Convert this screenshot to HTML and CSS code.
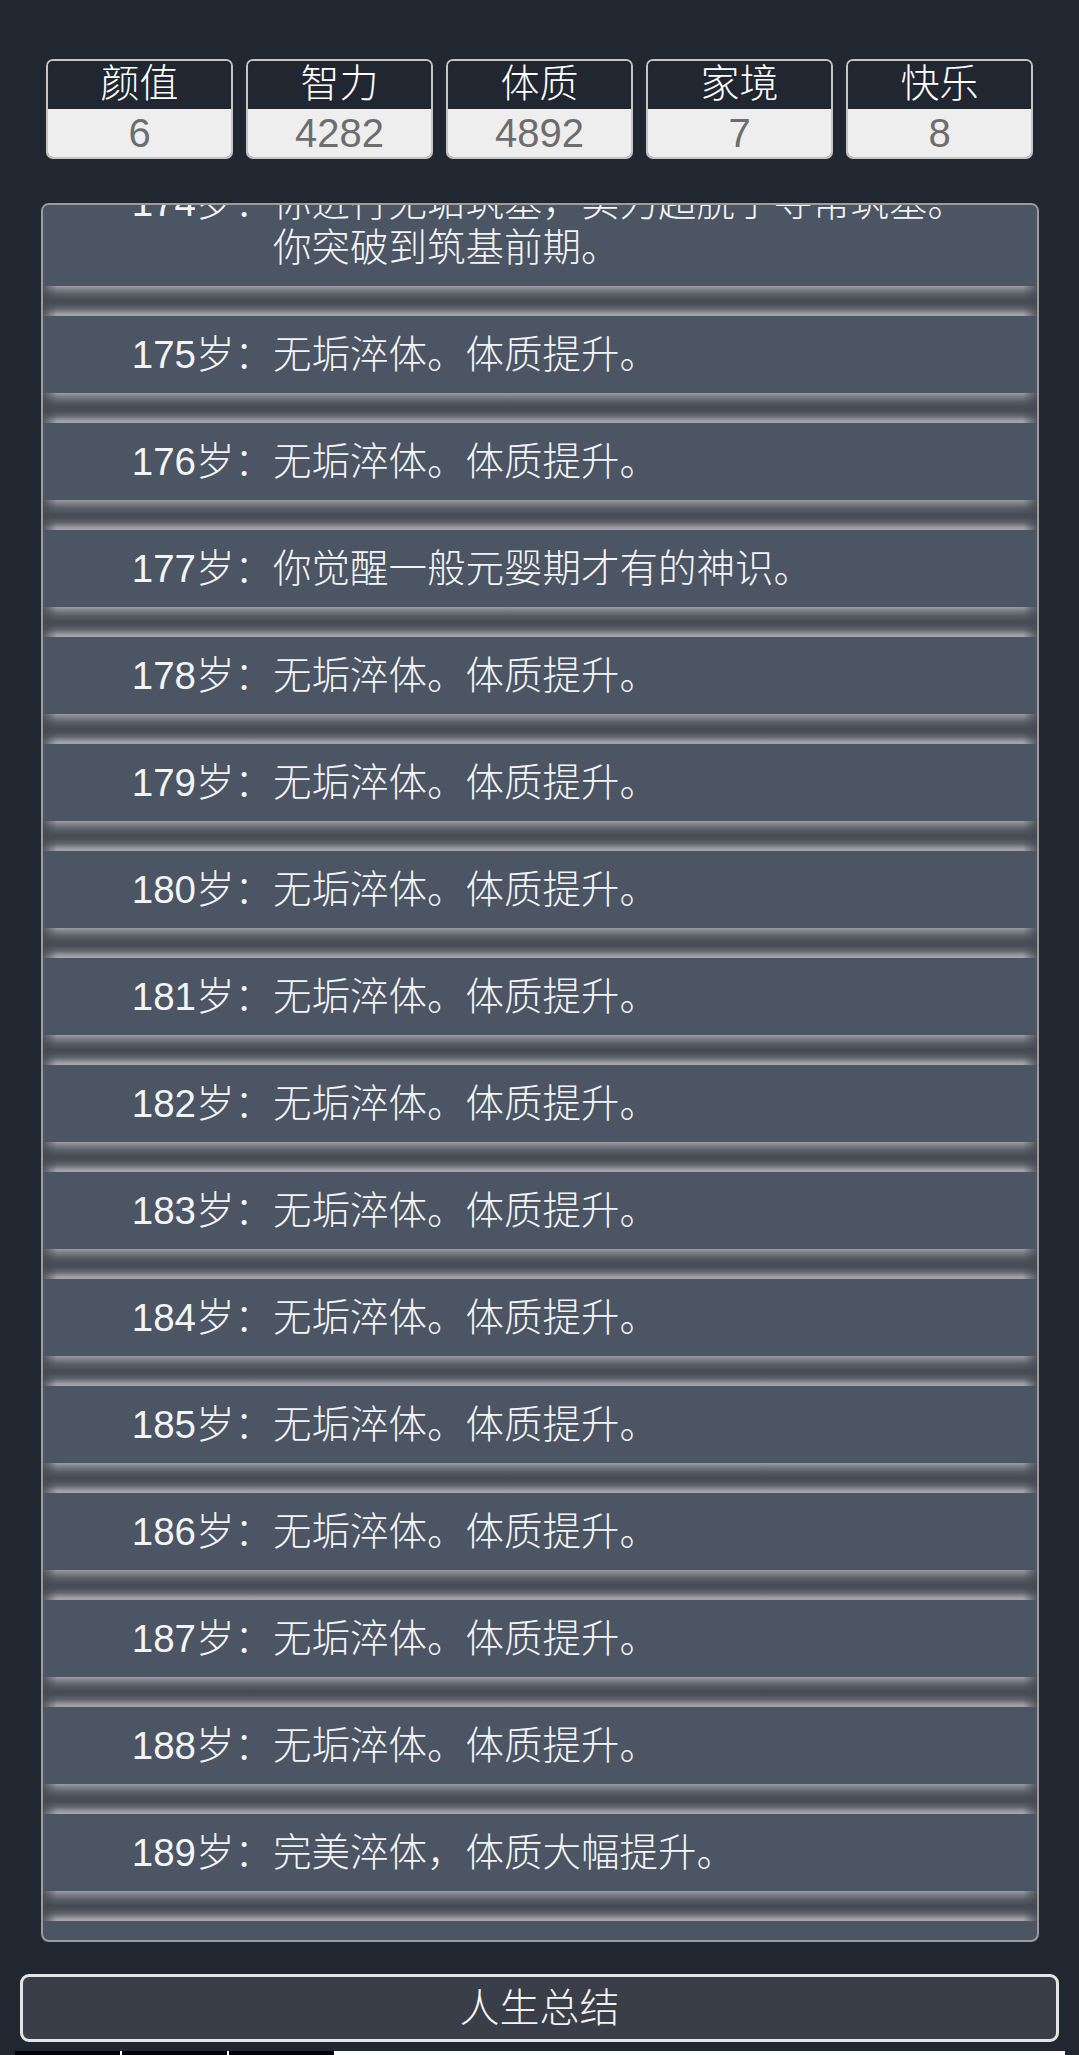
FILE: index.html
```html
<!DOCTYPE html>
<html lang="zh-CN">
<head>
<meta charset="utf-8">
<title>人生重开</title>
<link rel="stylesheet" href="styles.css">
</head>
<body>
<div class="page">
  <div class="stats">
    <div class="stat"><div class="stat-name">颜值</div><div class="stat-value">6</div></div>
    <div class="stat"><div class="stat-name">智力</div><div class="stat-value">4282</div></div>
    <div class="stat"><div class="stat-name">体质</div><div class="stat-value">4892</div></div>
    <div class="stat"><div class="stat-name">家境</div><div class="stat-value">7</div></div>
    <div class="stat"><div class="stat-name">快乐</div><div class="stat-value">8</div></div>
  </div>

  <div class="panel">
    <ul class="log">
      <li class="row"><span class="age">174岁：</span><span class="event">你进行无垢筑基，实力超脱于寻常筑基。你突破到筑基前期。</span></li>
      <li class="row"><span class="age">175岁：</span><span class="event">无垢淬体。体质提升。</span></li>
      <li class="row"><span class="age">176岁：</span><span class="event">无垢淬体。体质提升。</span></li>
      <li class="row"><span class="age">177岁：</span><span class="event">你觉醒一般元婴期才有的神识。</span></li>
      <li class="row"><span class="age">178岁：</span><span class="event">无垢淬体。体质提升。</span></li>
      <li class="row"><span class="age">179岁：</span><span class="event">无垢淬体。体质提升。</span></li>
      <li class="row"><span class="age">180岁：</span><span class="event">无垢淬体。体质提升。</span></li>
      <li class="row"><span class="age">181岁：</span><span class="event">无垢淬体。体质提升。</span></li>
      <li class="row"><span class="age">182岁：</span><span class="event">无垢淬体。体质提升。</span></li>
      <li class="row"><span class="age">183岁：</span><span class="event">无垢淬体。体质提升。</span></li>
      <li class="row"><span class="age">184岁：</span><span class="event">无垢淬体。体质提升。</span></li>
      <li class="row"><span class="age">185岁：</span><span class="event">无垢淬体。体质提升。</span></li>
      <li class="row"><span class="age">186岁：</span><span class="event">无垢淬体。体质提升。</span></li>
      <li class="row"><span class="age">187岁：</span><span class="event">无垢淬体。体质提升。</span></li>
      <li class="row"><span class="age">188岁：</span><span class="event">无垢淬体。体质提升。</span></li>
      <li class="row"><span class="age">189岁：</span><span class="event">完美淬体，体质大幅提升。</span></li>
    </ul>
  </div>

  <button class="summary" type="button">人生总结</button>

  <div class="tabstrip">
    <span class="tab"></span><span class="tab"></span><span class="tab"></span>
  </div>
</div>
</body>
</html>
```

FILE: styles.css
```css
html, body {
  margin: 0;
  padding: 0;
  background: #212731;
}

body {
  width: 1079px;
  height: 2055px;
  overflow: hidden;
  font-family: "Liberation Sans", "Noto Sans CJK SC", sans-serif;
  font-weight: 300;
  color: #f4f4f4;
}

.page {
  display: flex;
  flex-direction: column;
  width: 1079px;
}

/* ---------- stats ---------- */
.stats {
  display: flex;
  justify-content: center;
  gap: 13px;
  padding-top: 59px;
}

.stat {
  box-sizing: border-box;
  width: 187px;
  height: 100px;
  border: 2.5px solid #c5c5c5;
  border-radius: 7px;
  overflow: hidden;
  display: flex;
  flex-direction: column;
}

.stat-name {
  height: 48px;
  line-height: 46px;
  background: #212731;
  color: #ffffff;
  font-size: 39px;
  text-align: center;
}

.stat-value {
  flex: 1;
  background: #eeeeee;
  color: #6d6d6d;
  font-size: 40px;
  line-height: 48px;
  text-align: center;
}

/* ---------- panel ---------- */
.panel {
  box-sizing: border-box;
  margin: 44px 0 0 41px;
  width: 998px;
  height: 1739px;
  border: 2px solid #9c9c9c;
  border-radius: 8px;
  background: #4b5563;
  overflow: hidden;
}

.log {
  list-style: none;
  margin: -41px 0 0 0;
  padding: 0;
}

.row {
  display: grid;
  grid-template-columns: 230px 1fr;
  padding: 16px 47px 16px 0;
  background: #4b5563;
  font-size: 38.5px;
  line-height: 45px;
  color: #f3f4f6;
  position: relative;
  margin-bottom: 30px;
}

.row::after {
  content: "";
  position: absolute;
  left: 0;
  right: 0;
  bottom: -30px;
  height: 30px;
  background:
    linear-gradient(to right, rgba(70, 74, 83, 0.85) 0, rgba(70, 74, 83, 0) 14px, rgba(70, 74, 83, 0) calc(100% - 14px), rgba(70, 74, 83, 0.85) 100%),
    linear-gradient(to bottom, #9a9da3 0%, #80838a 10%, #5a5e66 28%, #474b54 48%, #4a4e57 60%, #62666d 76%, #9a9ca1 92%, #a6a8ac 100%);
}

.age {
  text-align: right;
  white-space: nowrap;
}

.event {
  word-break: break-all;
}

/* ---------- summary button ---------- */
.summary {
  box-sizing: border-box;
  margin: 32px 0 0 20px;
  width: 1039px;
  height: 68px;
  padding: 0;
  border: 3px solid #e4e4e4;
  border-radius: 9px;
  background: #393e48;
  color: #f4f4f4;
  font-family: "Liberation Sans", "Noto Sans CJK SC", sans-serif;
  font-weight: 300;
  font-size: 40px;
  line-height: 60px;
  text-align: center;
}

/* ---------- bottom strip ---------- */
.tabstrip {
  display: flex;
  gap: 2px;
  margin: 9px 0 0 15px;
  width: 1050px;
  height: 4px;
  background: #ffffff;
}

.tab {
  width: 105px;
  height: 4px;
  background: #000000;
}
```
